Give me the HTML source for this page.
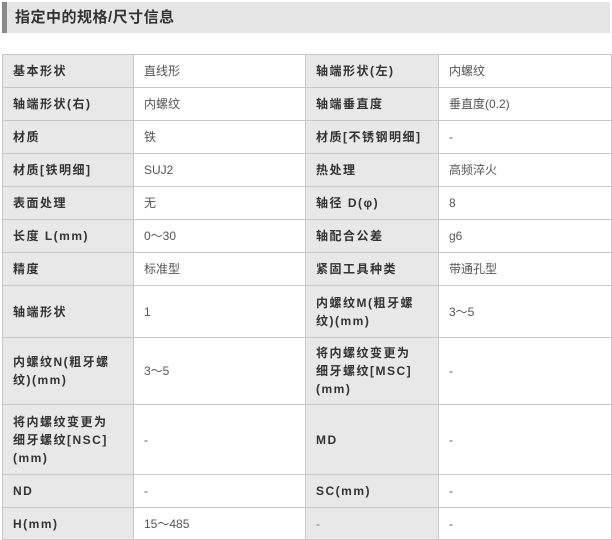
<!DOCTYPE html>
<html><head><meta charset="utf-8"><style>
body{margin:0;background:#fff;width:612px;height:539px;overflow:hidden;font-family:"Liberation Sans","Noto Sans CJK SC",sans-serif;}
.h{position:absolute;left:2px;top:2px;width:608px;height:31px;background:#e6e6e6;border-left:5px solid #8a8a8a;box-sizing:border-box;font-size:15px;font-weight:bold;color:#333;line-height:31px;padding-left:8px;letter-spacing:0.5px;}
table{position:absolute;left:2px;top:54px;width:609px;border-collapse:collapse;table-layout:fixed;}
td{border:1px solid #c8c8c8;font-size:12px;padding:0 10px;color:#555;line-height:18px;vertical-align:middle;white-space:nowrap;overflow:hidden;}
td.l{background:#e8e8e8;color:#333;font-weight:bold;letter-spacing:1.5px;}
td.g{font-weight:normal;color:#777;}
</style></head><body>
<div class="h">指定中的规格/尺寸信息</div>
<table>
<colgroup><col style="width:131px"><col style="width:172px"><col style="width:133px"><col style="width:173px"></colgroup>
<tr style="height:33px"><td class="l">基本形状</td><td>直线形</td><td class="l">轴端形状(左)</td><td>内螺纹</td></tr>
<tr style="height:33px"><td class="l">轴端形状(右)</td><td>内螺纹</td><td class="l">轴端垂直度</td><td>垂直度(0.2)</td></tr>
<tr style="height:33px"><td class="l">材质</td><td>铁</td><td class="l">材质[不锈钢明细]</td><td>-</td></tr>
<tr style="height:33px"><td class="l">材质[铁明细]</td><td>SUJ2</td><td class="l">热处理</td><td>高频淬火</td></tr>
<tr style="height:33px"><td class="l">表面处理</td><td>无</td><td class="l">轴径 D(φ)</td><td>8</td></tr>
<tr style="height:33px"><td class="l">长度 L(mm)</td><td>0～30</td><td class="l">轴配合公差</td><td>g6</td></tr>
<tr style="height:33px"><td class="l">精度</td><td>标准型</td><td class="l">紧固工具种类</td><td>带通孔型</td></tr>
<tr style="height:52px"><td class="l">轴端形状</td><td>1</td><td class="l">内螺纹M(粗牙螺<br>纹)(mm)</td><td>3～5</td></tr>
<tr style="height:67px"><td class="l">内螺纹N(粗牙螺<br>纹)(mm)</td><td>3～5</td><td class="l">将内螺纹变更为<br>细牙螺纹[MSC]<br>(mm)</td><td>-</td></tr>
<tr style="height:70px"><td class="l">将内螺纹变更为<br>细牙螺纹[NSC]<br>(mm)</td><td>-</td><td class="l">MD</td><td>-</td></tr>
<tr style="height:33px"><td class="l">ND</td><td>-</td><td class="l">SC(mm)</td><td>-</td></tr>
<tr style="height:32px"><td class="l">H(mm)</td><td>15～485</td><td class="l g">-</td><td>-</td></tr>
</table>
</body></html>
